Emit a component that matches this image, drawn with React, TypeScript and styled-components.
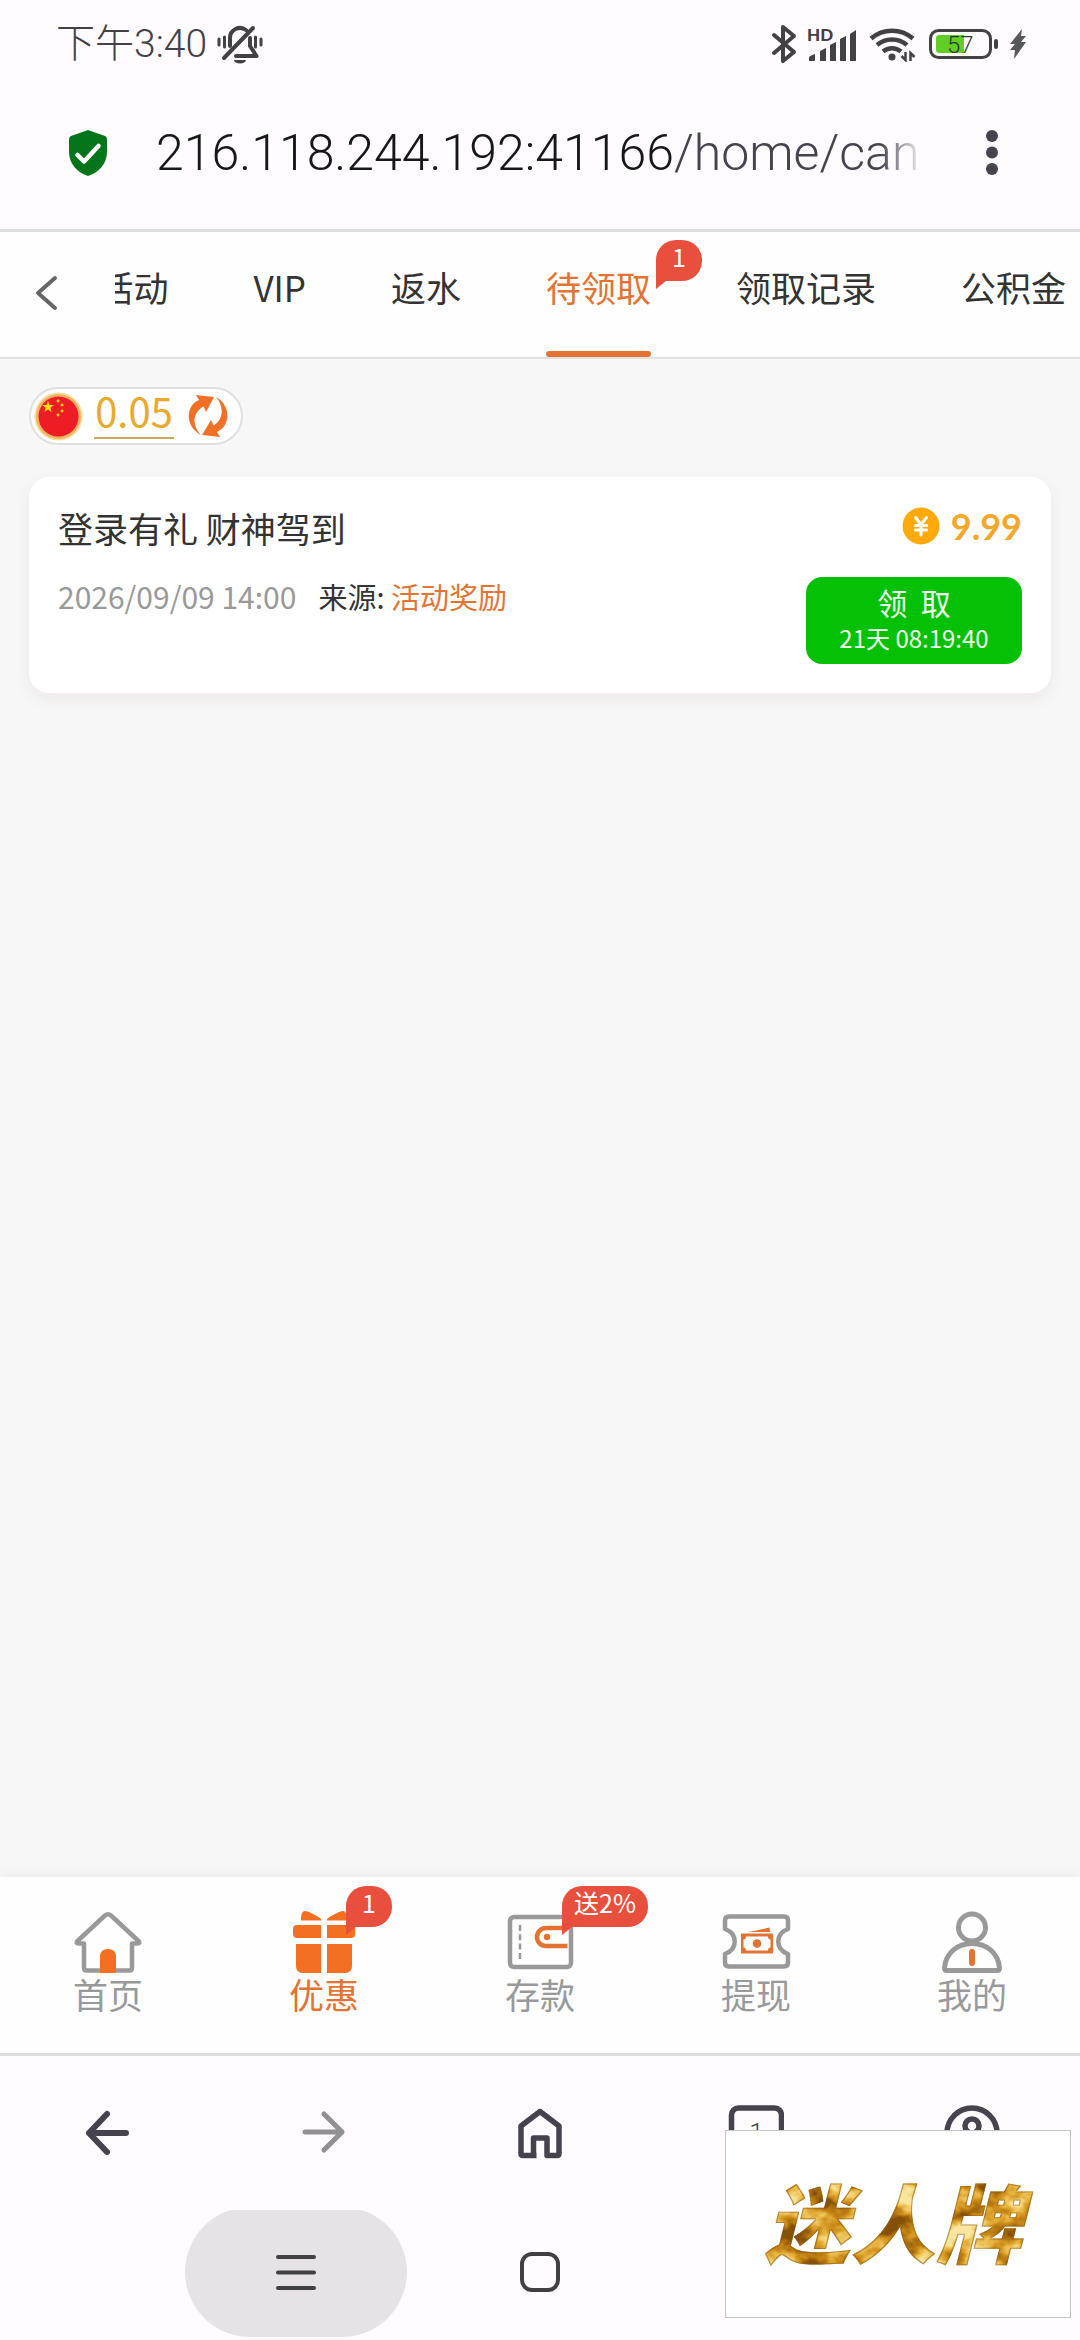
import React from "react";
import styled, { createGlobalStyle, css } from "styled-components";

const cjk = `"Noto Sans CJK SC", "Noto Sans", sans-serif`;
const latin = `Roboto, "Noto Sans CJK SC", sans-serif`;

const color = {
  chrome: "#fffbff",
  ink: "#46424e",
  text: "#333333",
  muted: "#999999",
  brand: "#e27333",
  vivid: "#f36f21",
  badge: "#e94f3d",
  gold: "#eaa92c",
  line: "#dedede",
};

const GlobalStyle = createGlobalStyle`
  *, *::before, *::after { box-sizing: border-box; }
  body { margin: 0; background: #f7f7f7; font-family: ${cjk}; color: ${color.text}; }
  button { border: 0; padding: 0; background: none; font: inherit; color: inherit; cursor: pointer; }
  a { color: inherit; text-decoration: none; }
  svg { display: block; flex: none; }
`;

const Screen = styled.div`
  position: relative;
  display: flex;
  flex-direction: column;
  min-height: 100vh;
  overflow: hidden;
`;

/* ---------- top chrome ---------- */

const Chrome = styled.header`
  background: ${color.chrome};
  border-bottom: 3px solid ${color.line};
`;

const StatusBar = styled.div`
  display: flex;
  align-items: center;
  justify-content: space-between;
  height: 88px;
  padding: 0 53px 0 56px;
  color: #424143;
`;

const StatusGroup = styled.div<{ $gap: number }>`
  display: flex;
  align-items: center;
  gap: ${(p) => p.$gap}px;
`;

const Clock = styled.time`
  font-family: ${latin};
  font-size: 39px;
  font-weight: 300;
  line-height: 48px;
`;

const AddressBar = styled.div`
  display: flex;
  align-items: center;
  height: 141px;
  padding: 0 68px 12px 68px;
`;

const Address = styled.button`
  flex: 1;
  min-width: 0;
  margin: 0 48px;
  overflow: hidden;
  text-align: left;
  white-space: nowrap;
  font-family: ${latin};
  font-size: 50px;
  font-weight: 300;
  line-height: 64px;
  color: ${color.ink};
  mask-image: linear-gradient(to right, #000 calc(100% - 44px), transparent);
`;

const Host = styled.span`
  color: #17161a;
`;

/* ---------- page tabs ---------- */

const TabBar = styled.nav`
  display: flex;
  height: 127px;
  background: #fefefe;
  border-bottom: 2px solid #e1e1e1;
`;

const BackButton = styled.button`
  flex: none;
  width: 115px;
  padding: 0 0 4px 34px;
`;

const TabScroller = styled.div`
  display: flex;
  flex: 1;
  min-width: 0;
  justify-content: flex-end;
  gap: 85px;
  padding-right: 14px;
  overflow: hidden;
`;

const Tab = styled.a<{ $active?: boolean }>`
  position: relative;
  flex: none;
  padding-top: 30px;
  font-size: 35px;
  line-height: 50px;
  white-space: nowrap;
  ${(p) =>
    p.$active &&
    css`
      color: ${color.brand};
      &::after {
        content: "";
        position: absolute;
        left: 0;
        right: 0;
        bottom: 0;
        height: 6px;
        border-radius: 3px;
        background: ${color.brand};
      }
    `}
`;

const Badge = styled.span<{ $left: string; $top: number }>`
  position: absolute;
  left: ${(p) => p.$left};
  top: ${(p) => p.$top}px;
  min-width: 46px;
  height: 41px;
  padding: 0 12px;
  border-radius: 20px 20px 20px 0;
  background: ${color.badge};
  color: #ffffff;
  font-size: 25px;
  line-height: 33px;
  text-align: center;
  white-space: nowrap;
  &::after {
    content: "";
    position: absolute;
    left: 0;
    top: 100%;
    border-top: 8px solid ${color.badge};
    border-right: 10px solid transparent;
  }
`;

/* ---------- content ---------- */

const Content = styled.main`
  flex: 1;
  padding: 28px 29px;
  background: #f7f7f7;
`;

const Balance = styled.div`
  display: inline-flex;
  align-items: center;
  height: 58px;
  padding: 0 13px 0 3px;
  border: 2px solid #e0e0e0;
  border-radius: 29px;
  background: #ffffff;
`;

const BalanceValue = styled.a`
  min-width: 80px;
  margin: 0 14px 0 11px;
  padding-bottom: 10px;
  border-bottom: 2px solid #c9a95c;
  color: ${color.gold};
  font-size: 40px;
  line-height: 34px;
  text-align: center;
`;

const Card = styled.article`
  margin-top: 31px;
  padding: 30px 29px 29px 29px;
  border-radius: 20px;
  background: #ffffff;
  box-shadow: 0 6px 16px rgba(120, 60, 30, 0.07);
`;

const CardRow = styled.div`
  display: flex;
  justify-content: space-between;
  align-items: flex-start;
  & + & {
    margin-top: 28px;
  }
`;

const CardTitle = styled.h2`
  margin: 0;
  font-size: 35px;
  font-weight: 400;
  line-height: 42px;
`;

const Amount = styled.div`
  display: flex;
  align-items: center;
  gap: 11px;
  color: #f2a92b;
  font-family: Lato, "Noto Sans CJK SC", sans-serif;
  font-size: 36px;
  font-weight: 700;
  line-height: 38px;
`;

const Meta = styled.p`
  display: flex;
  gap: 22px;
  margin: 0;
  font-size: 29px;
  line-height: 38px;
`;

const When = styled.time`
  font-size: 30px;
  color: ${color.muted};
`;

const Source = styled.span`
  color: ${color.brand};
`;

const ClaimButton = styled.button`
  display: flex;
  flex-direction: column;
  align-items: center;
  width: 216px;
  height: 87px;
  padding-top: 7px;
  border-radius: 16px;
  background: #05c105;
  color: #f2fff2;
  font-size: 30px;
  line-height: 36px;
`;

const Countdown = styled.span`
  font-size: 24px;
`;

/* ---------- site navigation ---------- */

const SiteNav = styled.nav`
  display: flex;
  height: 179px;
  padding-top: 33px;
  background: #fefefe;
  border-bottom: 3px solid ${color.line};
  box-shadow: 0 0 12px rgba(0, 0, 0, 0.08);
`;

const SiteItem = styled.a<{ $active?: boolean }>`
  display: flex;
  flex: 1;
  flex-direction: column;
  align-items: center;
  color: ${(p) => (p.$active ? color.brand : color.muted)};
  font-size: 35px;
  line-height: 40px;
`;

const IconSlot = styled.span`
  position: relative;
`;

/* ---------- bottom chrome ---------- */

const Toolbar = styled.nav`
  display: flex;
  height: 154px;
  background: ${color.chrome};
`;

const ToolButton = styled.button<{ $dim?: boolean }>`
  display: flex;
  flex: 1;
  align-items: center;
  justify-content: center;
  color: ${(p) => (p.$dim ? "#908f92" : color.ink)};
`;

const SystemNav = styled.nav`
  display: flex;
  align-items: center;
  justify-content: center;
  gap: 22px;
  height: 130px;
  padding-bottom: 6px;
  overflow: hidden;
  background: ${color.chrome};
  color: #414042;
`;

const SystemButton = styled.button<{ $pressed?: boolean }>`
  display: flex;
  flex: none;
  align-items: center;
  justify-content: center;
  width: 222px;
  height: 130px;
  border-radius: 65px;
  background: ${(p) => (p.$pressed ? "#e6e2e6" : "transparent")};
`;

const Watermark = styled.div`
  position: absolute;
  right: 9px;
  bottom: 22px;
  display: flex;
  align-items: center;
  justify-content: center;
  width: 346px;
  height: 188px;
  border: 1px solid #c4c5c8;
  background: #ffffff;
`;

/* ---------- drawings ---------- */

const BrandLogo = () => (
  <svg width="320" height="130" viewBox="0 0 320 130">
    <defs>
      <filter id="gold" x="0" y="0" width="320" height="130" filterUnits="userSpaceOnUse" colorInterpolationFilters="sRGB">
        <feTurbulence type="fractalNoise" baseFrequency="0.022 0.032" numOctaves="4" seed="7" result="noise" />
        <feColorMatrix in="noise" type="matrix" values="2.8 0 0 0 -0.85  2.8 0 0 0 -0.85  2.8 0 0 0 -0.85  0 0 0 0 1" result="grey" />
        <feComponentTransfer in="grey" result="foil">
          <feFuncR type="table" tableValues="0.52 0.68 0.80 0.89 0.95 0.98" />
          <feFuncG type="table" tableValues="0.31 0.44 0.55 0.68 0.80 0.90" />
          <feFuncB type="table" tableValues="0.03 0.06 0.10 0.22 0.42 0.62" />
        </feComponentTransfer>
        <feComposite in="foil" in2="SourceAlpha" operator="in" result="fill" />
        <feMorphology in="SourceAlpha" operator="erode" radius="1" result="core" />
        <feFlood floodColor="#8a5a12" floodOpacity="0.55" />
        <feComposite in2="SourceAlpha" operator="in" />
        <feComposite in2="core" operator="out" result="rim" />
        <feMerge>
          <feMergeNode in="fill" />
          <feMergeNode in="rim" />
        </feMerge>
      </filter>
    </defs>
    <text x="26" y="98" fontFamily="Noto Sans CJK SC, sans-serif" fontSize="86" fontWeight="900" fontStyle="italic" fill="#c98a18" filter="url(#gold)">
      迷人牌
    </text>
  </svg>
);

const MuteIcon = () => (
  <svg width="46" height="40" viewBox="0 0 46 40" fill="none" stroke="currentColor" strokeWidth="4" strokeLinecap="round" strokeLinejoin="round">
    <path d="M13 22V14a10 10 0 0 1 16-8M33 14v8l6.500 10H19" />
    <path d="M7 34 36 4" />
    <path d="M17 36h12a6 3.500 0 0 1-12 0Z" fill="currentColor" stroke="none" />
    <path d="M2 15v6M7.500 13v10M38.500 13v10M44 15v6" strokeWidth="3" />
  </svg>
);

const BluetoothIcon = () => (
  <svg width="26" height="40" viewBox="0 0 26 40" fill="none" stroke="currentColor" strokeWidth="4" strokeLinecap="round" strokeLinejoin="round">
    <path d="M3 11 23 28 12 37V3l11 9L3 29" />
  </svg>
);

const SignalIcon = () => (
  <svg width="52" height="40" viewBox="0 -4 52 40" fill="currentColor">
    <text x="0" y="13" fontFamily="Lato, sans-serif" fontSize="17" fontWeight="900">HD</text>
    <path d="M2 33v-3q0-1 1-2l5-2v6q0 1-1 1ZM13 33V23l6-3v13ZM23 33V17l6-3v19ZM33 33V11l6-3v25ZM43 33V6l6-4v31Z" />
  </svg>
);

const WifiIcon = () => (
  <svg width="50" height="36" viewBox="0 0 50 36" fill="none" stroke="currentColor" strokeWidth="4.500">
    <path d="M2 12.500a32 32 0 0 1 42 0M8 19a23 23 0 0 1 30 0M14 25.500a14 14 0 0 1 18 0" />
    <circle cx="23" cy="31" r="3.500" fill="currentColor" stroke="none" />
    <path d="M36.500 26v8l-4-4M41.500 35v-8l4 4" strokeWidth="2.500" />
  </svg>
);

const BatteryIcon = () => (
  <svg width="70" height="32" viewBox="0 0 70 32" fill="none">
    <rect x="1.500" y="2.500" width="60" height="27" rx="8" stroke="#424143" strokeWidth="3" />
    <path d="M10 7h25v18H10q-3 0-3-3V10q0-3 3-3Z" fill="#63cd28" />
    <text x="18" y="25" fontFamily="Roboto, sans-serif" fontSize="24" fontWeight="300" fill="#333">57</text>
    <rect x="65" y="11" width="4" height="10" rx="2" fill="#424143" />
  </svg>
);

const BoltIcon = () => (
  <svg width="18" height="32" viewBox="0 0 18 32" fill="#575659">
    <path d="M13 1 1 16h5L1 22h5L5 31 17 14h-5l5-6h-5Z" />
  </svg>
);

const ShieldIcon = () => (
  <svg width="40" height="48" viewBox="0 0 40 48" fill="none">
    <path d="M20 1 37 7q2 1 2 3v13c0 12-9 21-19 24C10 44 1 35 1 23V10q0-2 2-3Z" fill="#05751b" />
    <path d="M9.500 26 16 32.500 30.500 17" stroke="#fff" strokeWidth="4.500" strokeLinecap="round" strokeLinejoin="round" />
  </svg>
);

const MoreIcon = () => (
  <svg width="40" height="48" viewBox="0 0 40 48" fill={color.ink}>
    <circle cx="20" cy="7" r="6" />
    <circle cx="20" cy="23.500" r="6" />
    <circle cx="20" cy="40" r="6" />
  </svg>
);

const ChevronIcon = () => (
  <svg width="26" height="40" viewBox="0 0 26 40" fill="none" stroke="#666" strokeWidth="4" strokeLinecap="round" strokeLinejoin="round">
    <path d="M21 5 4 20l17 15" />
  </svg>
);

const starPath = "M0-6 1.500-2H5.800L2.400.7 3.600 4.900 0 2.400-3.600 4.900-2.400.7-5.800-2H-1.500Z";

const FlagIcon = () => (
  <svg width="49" height="49" viewBox="0 0 49 49">
    <circle cx="24.500" cy="24.500" r="24" fill="#f7dc9c" />
    <circle cx="24.500" cy="24.500" r="22.500" fill="#eeb461" />
    <circle cx="24.500" cy="24.500" r="20" fill="#ee1c25" />
    <g fill="#ffe100">
      <path d={starPath} transform="translate(14 15)" />
      <circle cx="24" cy="9" r="1.400" />
      <circle cx="28" cy="13" r="1.400" />
      <circle cx="28" cy="19" r="1.400" />
      <circle cx="24" cy="23" r="1.400" />
    </g>
  </svg>
);

const RefreshIcon = () => (
  <svg width="40" height="44" viewBox="0 0 40 44" fill="#f07028">
    <path d="M8 1 26 3 18 18 15.500 12.500C4 19 4 32 13 41 -3 33-3 12 11 6Z" />
    <path d="M32 43 14 41l9-15 2.500 5.500C36 25 36 12 28 3c15 8 15 29 1 35Z" />
  </svg>
);

const YuanIcon = () => (
  <svg width="38" height="38" viewBox="0 0 38 38" fill="none">
    <circle cx="19" cy="19" r="18.500" fill="#ffa90d" />
    <path d="m13.500 10.500 5.500 7 5.500-7M19 17.500V28M13.500 18.500h11M13.500 23h11" stroke="#fff" strokeWidth="3" strokeLinecap="round" strokeLinejoin="round" />
  </svg>
);

const siteIcon = { width: 72, height: 64, viewBox: "0 0 72 64", fill: "none", strokeLinejoin: "round" as const, strokeWidth: 4.5 };

const HomeIcon = () => (
  <svg {...siteIcon} stroke={color.muted}>
    <path d="M33 5.500q3-2.500 6 0L66.500 31q2 2.500-1 2.500H60V58q0 2.500-2.500 2.500h-43Q12 60.500 12 58V33.500H6.500q-3 0-1-2.500Z" />
    <path d="M28 63V47q0-8 8-8t8 8v16Z" fill={color.vivid} stroke="none" />
  </svg>
);

const GiftIcon = () => (
  <svg {...siteIcon}>
    <g fill={color.vivid}>
      <path d="M13 10.500c0-6 1-9.500 4-9.500 3 0 13 5 16 8v1.500ZM59 10.500c0-6-1-9.500-4-9.500-3 0-13 5-16 8v1.500Z" />
      <path d="M33 15v13H9q-4 0-4-4v-5q0-4 4-4ZM39 15v13h24q4 0 4-4v-5q0-4-4-4Z" />
      <path d="M8 34h25v29H15q-7 0-7-7ZM64 34H39v29h18q7 0 7-7Z" />
    </g>
  </svg>
);

const WalletIcon = () => (
  <svg {...siteIcon} stroke={color.muted}>
    <rect x="6" y="7" width="61" height="50" rx="4" />
    <path d="M16 15v34" strokeWidth="2.500" strokeDasharray="6 3.300" />
    <path d="M63.500 18H42a9 9 0 0 0 0 18h21.500" stroke={color.brand} />
    <circle cx="43" cy="27" r="3.200" fill={color.brand} stroke="none" />
  </svg>
);

const TicketIcon = () => (
  <svg {...siteIcon} stroke={color.muted}>
    <path d="M9 6.500h55q4 0 4 4v8.500c-13 5-13 20 0 25v8.500q0 4-4 4H9q-4 0-4-4V44c13-5 13-20 0-25v-8.500q0-4 4-4Z" />
    <g stroke="none" fill={color.brand}>
      <path d="m29 22 20.500-4.500.7 4.500Z" />
      <path d="M21 23.500h32v20H21Z" />
      <path d="M26 26.500h22q0 3 2.500 3v8q-2.500 0-2.500 3H26q0-3-2.500-3v-8q2.500 0 2.500-3Z" fill="#fff" />
      <circle cx="37" cy="33.500" r="4.300" />
    </g>
  </svg>
);

const PersonIcon = () => (
  <svg {...siteIcon} strokeWidth="5" stroke={color.muted}>
    <circle cx="36" cy="17.500" r="13.500" />
    <path d="M8.500 58c1-15 13-24.500 27.500-24.500S62.500 43 63.500 58q0 2.500-2.500 2.500H11q-2.500 0-2.500-2.500Z" />
    <path d="M36 42v11" stroke={color.brand} strokeWidth="6" strokeLinecap="round" />
  </svg>
);

const toolIcon = {
  width: 56,
  height: 56,
  viewBox: "0 0 56 56",
  fill: "none",
  stroke: "currentColor",
  strokeWidth: 6,
  strokeLinecap: "round" as const,
  strokeLinejoin: "round" as const,
};

const ArrowLeftIcon = () => (
  <svg {...toolIcon}>
    <path d="M46 28H9M27 9 9 28l18 19" />
  </svg>
);

const ArrowRightIcon = () => (
  <svg {...toolIcon} strokeWidth="5">
    <path d="M9 27h37M28 9l18 18-18 18" />
  </svg>
);

const HouseIcon = () => (
  <svg {...toolIcon} strokeWidth="5.500" strokeLinecap="butt">
    <path d="M24.500 50.500H11q-2 0-2-2V21L28 6.500 47 21v27.500q0 2-2 2H35V33H21.500v17.500" />
  </svg>
);

const WindowsIcon = () => (
  <svg {...toolIcon} strokeWidth="5.500">
    <rect x="3.500" y="3" width="50" height="50" rx="7" />
    <text x="28.500" y="37" textAnchor="middle" fontFamily="Roboto, sans-serif" fontWeight="300" fontSize="26" fill="currentColor" stroke="none">1</text>
  </svg>
);

const AccountIcon = () => (
  <svg {...toolIcon} strokeWidth="5.500">
    <circle cx="28" cy="28" r="25" />
    <circle cx="28" cy="21" r="7" />
    <path d="M12 45q16-14 32 0" />
  </svg>
);

const systemIcon = { width: 44, height: 44, viewBox: "0 0 44 44", fill: "none", stroke: "currentColor", strokeWidth: 4, strokeLinecap: "round" as const };

const MenuIcon = () => (
  <svg {...systemIcon}>
    <path d="M4 7h36M4 22.500h36M4 38h36" />
  </svg>
);

const RecentIcon = () => (
  <svg {...systemIcon}>
    <rect x="4" y="4" width="36" height="36" rx="10" />
  </svg>
);

const SystemBackIcon = () => (
  <svg {...systemIcon}>
    <path d="M29 6 13 22l16 16" />
  </svg>
);

/* ---------- data ---------- */

const tabs = [
  { label: "活动" },
  { label: "VIP" },
  { label: "返水" },
  { label: "待领取", active: true, badge: "1" },
  { label: "领取记录" },
  { label: "公积金" },
];

const siteLinks = [
  { label: "首页", Icon: HomeIcon },
  { label: "优惠", Icon: GiftIcon, active: true, badge: "1" },
  { label: "存款", Icon: WalletIcon, badge: "送2%" },
  { label: "提现", Icon: TicketIcon },
  { label: "我的", Icon: PersonIcon },
];

export default function App() {
  return (
    <Screen>
      <GlobalStyle />
      <Chrome>
        <StatusBar>
          <StatusGroup $gap={10}>
            <Clock>下午3:40</Clock>
            <MuteIcon />
          </StatusGroup>
          <StatusGroup $gap={10}>
            <BluetoothIcon />
            <SignalIcon />
            <WifiIcon />
            <BatteryIcon />
            <BoltIcon />
          </StatusGroup>
        </StatusBar>
        <AddressBar>
          <ShieldIcon />
          <Address>
            <Host>216.118.244.192:41166</Host>/home/can
          </Address>
          <button aria-label="更多">
            <MoreIcon />
          </button>
        </AddressBar>
      </Chrome>

      <TabBar>
        <BackButton aria-label="返回">
          <ChevronIcon />
        </BackButton>
        <TabScroller>
          {tabs.map((tab) => (
            <Tab key={tab.label} href="#" $active={tab.active}>
              {tab.label}
              {tab.badge && (
                <Badge $left="calc(100% + 5px)" $top={8}>
                  {tab.badge}
                </Badge>
              )}
            </Tab>
          ))}
        </TabScroller>
      </TabBar>

      <Content>
        <Balance>
          <FlagIcon />
          <BalanceValue href="#">0.05</BalanceValue>
          <button aria-label="刷新">
            <RefreshIcon />
          </button>
        </Balance>
        <Card>
          <CardRow>
            <CardTitle>登录有礼 财神驾到</CardTitle>
            <Amount>
              <YuanIcon />
              9.99
            </Amount>
          </CardRow>
          <CardRow>
            <Meta>
              <When>2026/09/09 14:00</When>
              <span>
                来源: <Source>活动奖励</Source>
              </span>
            </Meta>
            <ClaimButton>
              <span>领&nbsp; 取</span>
              <Countdown>21天 08:19:40</Countdown>
            </ClaimButton>
          </CardRow>
        </Card>
      </Content>

      <SiteNav>
        {siteLinks.map(({ label, Icon, active, badge }) => (
          <SiteItem key={label} href="#" $active={active}>
            <IconSlot>
              <Icon />
              {badge && (
                <Badge $left="58px" $top={-24}>
                  {badge}
                </Badge>
              )}
            </IconSlot>
            {label}
          </SiteItem>
        ))}
      </SiteNav>

      <Toolbar>
        <ToolButton aria-label="后退"><ArrowLeftIcon /></ToolButton>
        <ToolButton aria-label="前进" $dim><ArrowRightIcon /></ToolButton>
        <ToolButton aria-label="主页"><HouseIcon /></ToolButton>
        <ToolButton aria-label="标签页"><WindowsIcon /></ToolButton>
        <ToolButton aria-label="账户"><AccountIcon /></ToolButton>
      </Toolbar>
      <SystemNav>
        <SystemButton aria-label="菜单" $pressed><MenuIcon /></SystemButton>
        <SystemButton aria-label="桌面"><RecentIcon /></SystemButton>
        <SystemButton aria-label="系统返回"><SystemBackIcon /></SystemButton>
      </SystemNav>

      <Watermark>
        <BrandLogo />
      </Watermark>
    </Screen>
  );
}
